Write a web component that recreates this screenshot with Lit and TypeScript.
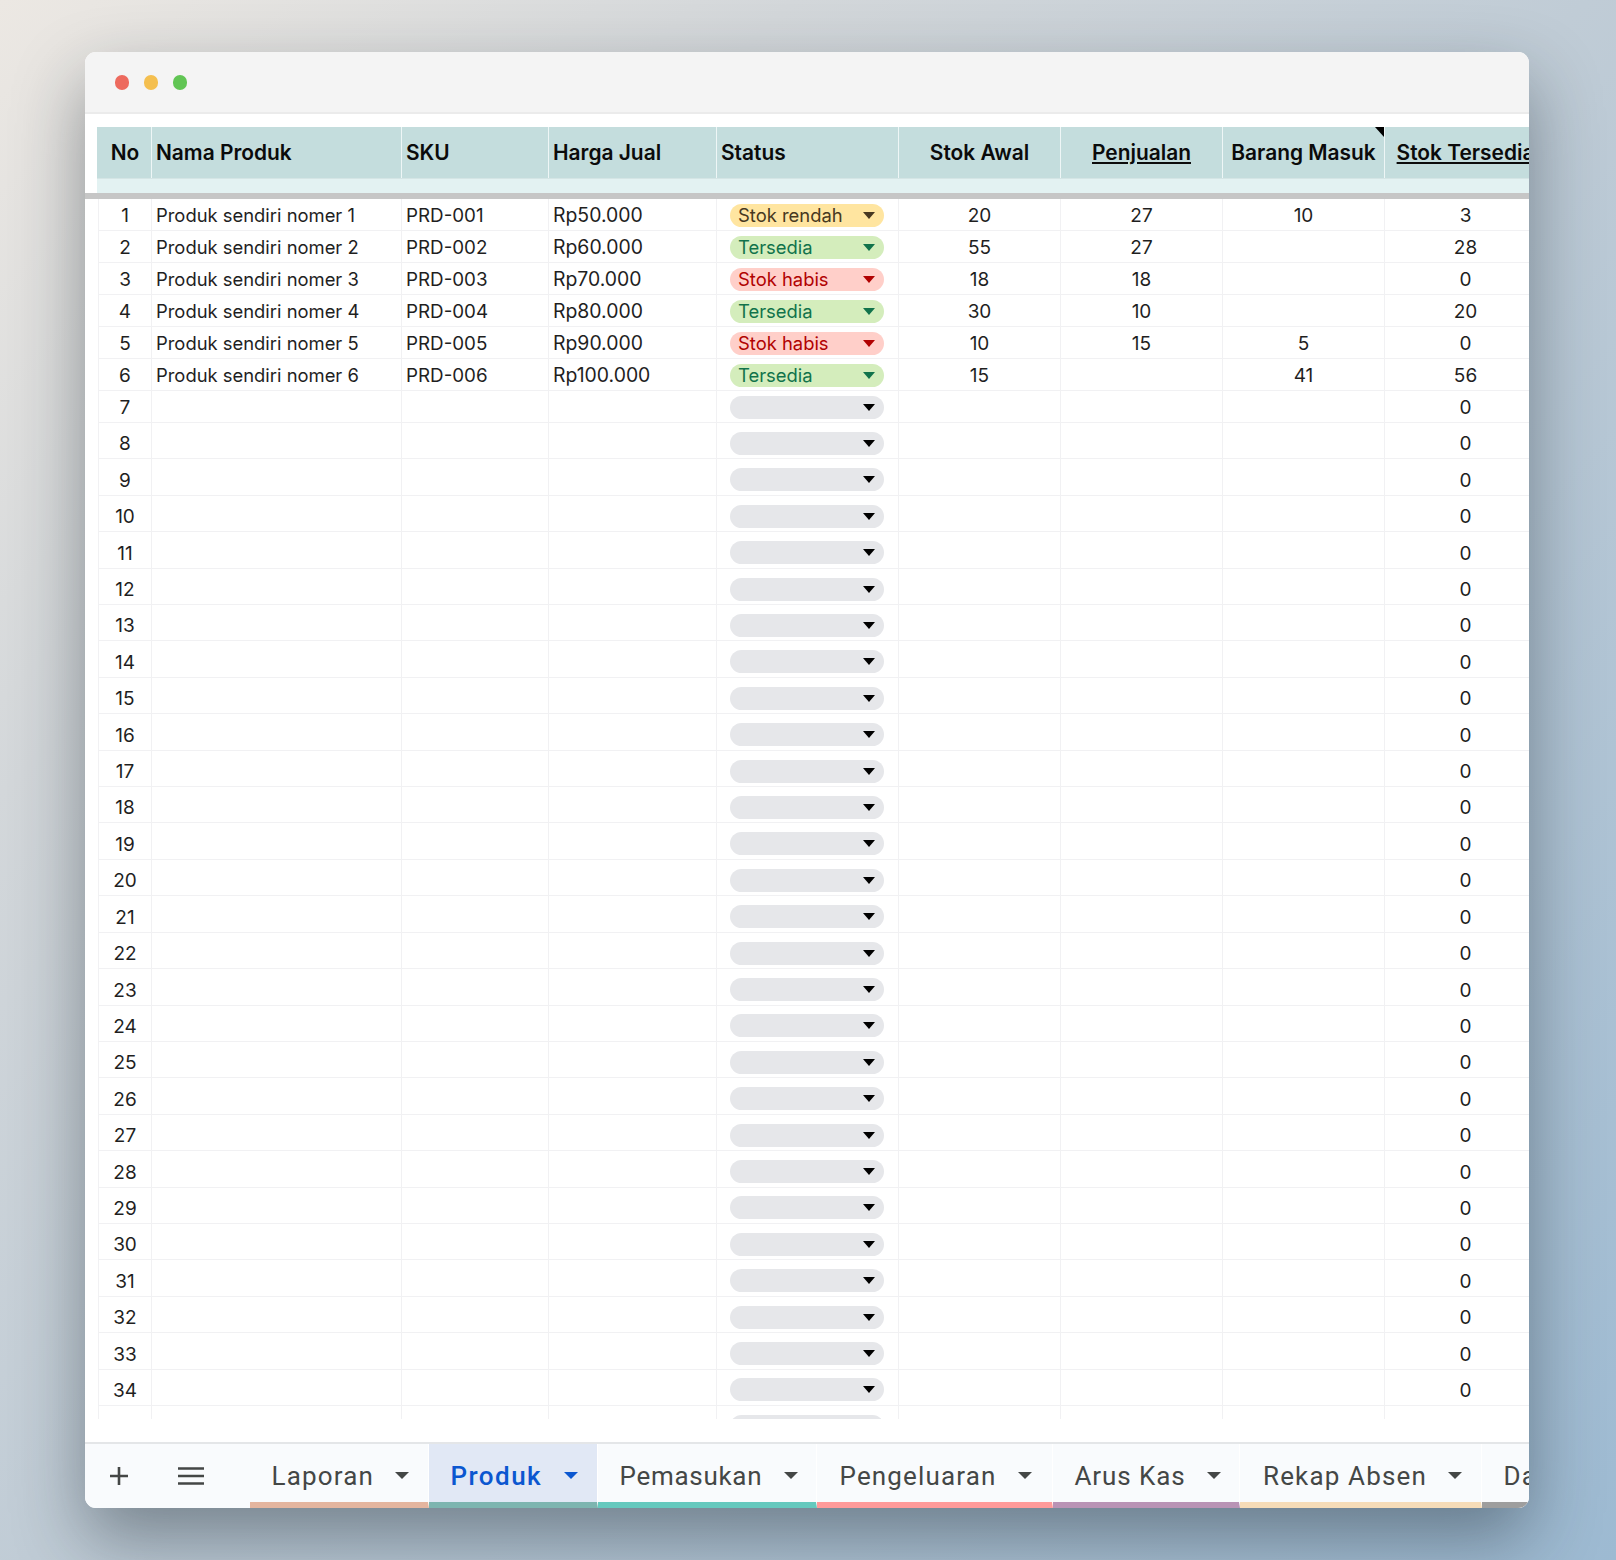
import { LitElement, html, css } from "lit";
import { customElement } from "lit/decorators.js";

const products = [
  ["1", "Produk sendiri nomer 1", "PRD-001", "Rp50.000", "low", "20", "27", "10", "3"],
  ["2", "Produk sendiri nomer 2", "PRD-002", "Rp60.000", "ok", "55", "27", "", "28"],
  ["3", "Produk sendiri nomer 3", "PRD-003", "Rp70.000", "out", "18", "18", "", "0"],
  ["4", "Produk sendiri nomer 4", "PRD-004", "Rp80.000", "ok", "30", "10", "", "20"],
  ["5", "Produk sendiri nomer 5", "PRD-005", "Rp90.000", "out", "10", "15", "5", "0"],
  ["6", "Produk sendiri nomer 6", "PRD-006", "Rp100.000", "ok", "15", "", "41", "56"],
];
const labels: Record<string, string> = { low: "Stok rendah", ok: "Tersedia", out: "Stok habis", none: "" };
const rows = [...products];
for (let i = 7; i <= 36; i++) rows.push([String(i), "", "", "", "none", "", "", "", "0"]);

const tabs = [
  { name: "Laporan", w: 179, color: "#e4b59f", ls: 1.15, pad: 21.5 },
  { name: "Produk", w: 169, color: "#7db5b0", ls: 1.45, pad: 21.5, active: true },
  { name: "Pemasukan", w: 219, color: "#65c9be", ls: 0.7, pad: 21.5 },
  { name: "Pengeluaran", w: 236, color: "#ff9a9a", ls: 1.15, pad: 22.5 },
  { name: "Arus Kas", w: 187, color: "#b993b5", ls: 0.9, pad: 21.5 },
  { name: "Rekap Absen", w: 242, color: "#f6dcb8", ls: 1.15, pad: 23 },
  { name: "Data", w: 120, color: "#9e9e9e", ls: 1.15, pad: 21.5 },
];

@customElement("app-root")
export class AppRoot extends LitElement {
  static styles = css`
    :host {
      display: block;
      height: 1560px;
      box-sizing: border-box;
      padding: 52px 87px 0 85px;
      background: linear-gradient(135deg, #ece8e3 0%, #d3d7da 25%, #c0ccd6 50%, #9dbad2 100%);
      font-family: "Inter", "Liberation Sans", sans-serif;
      color: #1f1f1f;
    }
    .window {
      height: 1456px;
      background: #fff;
      border-radius: 11px;
      overflow: hidden;
      display: flex;
      flex-direction: column;
      box-shadow: 0 30px 70px rgba(20, 30, 40, 0.42);
    }
    .titlebar {
      height: 62px;
      box-sizing: border-box;
      flex: none;
      background: #f4f4f4;
      border-bottom: 2px solid #ebebeb;
      display: flex;
      align-items: center;
      gap: 14.5px;
      padding: 1px 0 0 29.5px;
    }
    .dot { width: 14.5px; height: 14.5px; border-radius: 50%; }
    .red { background: #ed6a5e; }
    .yellow { background: #f4bf4f; }
    .green { background: #61c554; }
    .sheet {
      height: 1306px;
      flex: none;
      padding-top: 13px;
      box-sizing: content-box;
      overflow: hidden;
      display: flex;
      flex-direction: column;
    }
    .grid {
      display: grid;
      grid-template-columns: 53px 250px 147px 168px 182px 162px 162px 162px 162px;
      margin-left: 13px;
      width: max-content;
    }
    .grid.head {
      grid-template-columns: 54px 250px 147px 168px 182px 162px 162px 162px 162px;
      margin-left: 12px;
    }
    .hcell {
      position: relative;
      height: 51px;
      box-sizing: border-box;
      background: #c4dddd;
      border-left: 1px solid #eef6f6;
      display: flex;
      align-items: center;
      padding: 0 4px;
      font-size: 20.9px;
      font-weight: 600;
      color: #0b0b0b;
      white-space: nowrap;
    }
    .hcell:first-child { border-left: none; padding-left: 2px; }
    .hcell.c { justify-content: center; padding-right: 0; }
    .hcell.c:not(:first-child) { padding-left: 0; }
    .hcell.u { text-decoration: underline; }
    .note {
      position: absolute;
      top: 0;
      right: 0;
      width: 0;
      height: 0;
      border-top: 10px solid #000;
      border-left: 9px solid transparent;
    }
    .tint { height: 15px; background: #e3f2f2; grid-column: 1 / -1; border-top: 1px solid #d5e5e5; box-sizing: border-box; }
    .freeze { height: 6px; background: #c6c6c6; flex: none; }
    .body { height: 1220px; overflow: hidden; flex: none; }
    .cell {
      height: 32px;
      box-sizing: border-box;
      border-left: 1.5px solid #f1f1f3;
      border-bottom: 1.5px solid #f1f1f3;
      display: flex;
      align-items: flex-end;
      padding: 0 4px 3px;
      font-size: 19px;
      line-height: 23px;
      white-space: nowrap;
      color: #1f1f1f;
    }
    .cell.tall { height: 36.41px; }
    .cell.c { justify-content: center; padding-left: 0; padding-right: 0; }
    .cell.name { font-size: 18.4px; }
    .cell.sku { font-size: 18.8px; }
    .cell.price { font-size: 19.4px; }
    .cell.pillcell { padding-left: 12.5px; font-size: 18.4px; }
    .pill {
      width: 154px;
      height: 23px;
      margin-bottom: 0.5px;
      border-radius: 12px;
      box-sizing: border-box;
      padding: 0 9px 0 8.5px;
      display: flex;
      align-items: center;
      justify-content: space-between;
    }
    .pill i {
      width: 0;
      height: 0;
      border-left: 6px solid transparent;
      border-right: 6px solid transparent;
      border-top: 7.5px solid currentColor;
    }
    .low { background: #ffe5a0; color: #473821; }
    .ok { background: #d4edbc; color: #11734b; }
    .out { background: #ffcfc9; color: #b10202; }
    .none { background: #e6e7ea; color: #000; }
    .none i {
      border-left-width: 6.5px;
      border-right-width: 6.5px;
    }
    .gap { flex: 1; }
    .tabbar {
      flex: none;
      height: 66px;
      box-sizing: border-box;
      background: #f9fbfd;
      border-top: 2px solid #e4e6e8;
      display: flex;
      overflow: hidden;
    }
    .tools {
      flex: none;
      width: 165px;
      display: flex;
      align-items: center;
      box-sizing: border-box;
    }
    .tools svg { flex: none; display: block; }
    .tool-plus { margin-left: 24px; }
    .tool-menu { margin-left: 49px; }
    .tab {
      flex: none;
      box-sizing: border-box;
      height: 64px;
      border-bottom: 6px solid;
      border-right: 1px solid #fff;
      padding-top: 5px;
      display: flex;
      align-items: center;
      font-family: "Roboto", sans-serif;
      font-size: 26px;
      color: #444746;
      white-space: nowrap;
      position: relative;
    }
    .tab i {
      margin-left: 21.5px;
      width: 0;
      height: 0;
      border-left: 7.5px solid transparent;
      border-right: 7.5px solid transparent;
      border-top: 7.5px solid currentColor;
    }
    .tab.active {
      background: #e1e8f5;
      color: #0b57d0;
      font-weight: 500;
    }
  `;

  render() {
    const heads = [
      ["No", "c"], ["Nama Produk", ""], ["SKU", ""], ["Harga Jual", ""], ["Status", ""],
      ["Stok Awal", "c"], ["Penjualan", "c u"], ["Barang Masuk", "c"], ["Stok Tersedia", "c u"],
    ];
    return html`
      <div class="window">
        <div class="titlebar">
          <span class="dot red"></span><span class="dot yellow"></span><span class="dot green"></span>
        </div>
        <div class="sheet">
          <div class="grid head">
            ${heads.map(
              ([t, k]) => html`<div class="hcell ${k}">${t}${t === "Barang Masuk" ? html`<span class="note"></span>` : ""}</div>`
            )}
            <div class="tint"></div>
          </div>
          <div class="freeze"></div>
          <div class="body">
            <div class="grid">
              ${rows.map((r, i) => {
                const tall = i >= 7 ? "tall" : "";
                return html`
                  <div class="cell c ${tall}">${r[0]}</div>
                  <div class="cell name ${tall}">${r[1]}</div>
                  <div class="cell sku ${tall}">${r[2]}</div>
                  <div class="cell price ${tall}">${r[3]}</div>
                  <div class="cell pillcell ${tall}">
                    <div class="pill ${r[4]}"><span>${labels[r[4]]}</span><i></i></div>
                  </div>
                  <div class="cell c ${tall}">${r[5]}</div>
                  <div class="cell c ${tall}">${r[6]}</div>
                  <div class="cell c ${tall}">${r[7]}</div>
                  <div class="cell c ${tall}">${r[8]}</div>
                `;
              })}
            </div>
          </div>
        </div>
        <div class="gap"></div>
        <div class="tabbar">
          <div class="tools">
            <svg class="tool-plus" width="20" height="20" viewBox="0 0 20 20"><path d="M10 1v18M1 10h18" stroke="#444746" stroke-width="2.6" fill="none"/></svg>
            <svg class="tool-menu" width="26" height="18" viewBox="0 0 26 18"><path d="M0 1.5h26M0 9h26M0 16.5h26" stroke="#444746" stroke-width="2.4" fill="none"/></svg>
          </div>
          ${tabs.map(
            (t) => html`<div class="tab ${t.active ? "active" : ""}" style="width:${t.w}px;padding-left:${t.pad}px;letter-spacing:${t.ls}px;border-bottom-color:${t.color}">${t.name}<i></i></div>`
          )}
        </div>
      </div>
    `;
  }
}
